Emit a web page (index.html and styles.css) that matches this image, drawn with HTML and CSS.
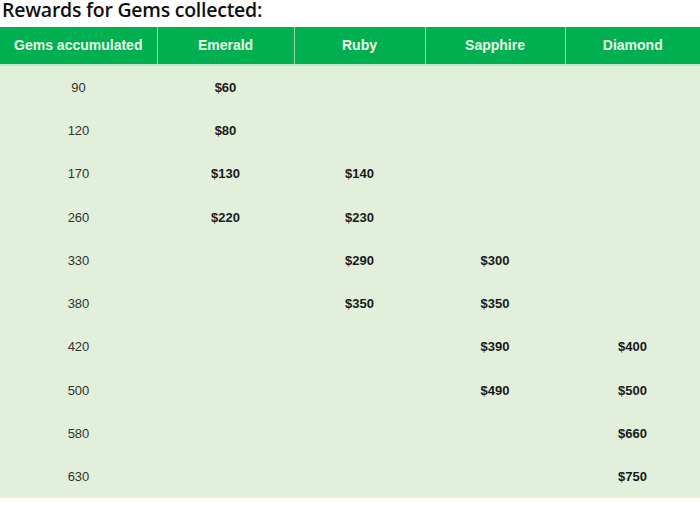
FILE: index.html
```html
<!DOCTYPE html>
<html>
<head>
<meta charset="utf-8">
<link rel="stylesheet" href="styles.css">
</head>
<body>
<h1 class="title">Rewards for Gems collected:</h1>
<table class="rewards">
<colgroup>
<col class="c1"><col class="c2"><col class="c3"><col class="c4"><col class="c5">
</colgroup>
<thead>
<tr><th>Gems accumulated</th><th>Emerald</th><th>Ruby</th><th>Sapphire</th><th>Diamond</th></tr>
</thead>
<tbody>
<tr><td>90</td><td class="v">$60</td><td></td><td></td><td></td></tr>
<tr><td>120</td><td class="v">$80</td><td></td><td></td><td></td></tr>
<tr><td>170</td><td class="v">$130</td><td class="v">$140</td><td></td><td></td></tr>
<tr><td>260</td><td class="v">$220</td><td class="v">$230</td><td></td><td></td></tr>
<tr><td>330</td><td></td><td class="v">$290</td><td class="v">$300</td><td></td></tr>
<tr><td>380</td><td></td><td class="v">$350</td><td class="v">$350</td><td></td></tr>
<tr><td>420</td><td></td><td></td><td class="v">$390</td><td class="v">$400</td></tr>
<tr><td>500</td><td></td><td></td><td class="v">$490</td><td class="v">$500</td></tr>
<tr><td>580</td><td></td><td></td><td></td><td class="v">$660</td></tr>
<tr><td>630</td><td></td><td></td><td></td><td class="v">$750</td></tr>
</tbody>
</table>
</body>
</html>
```
FILE: styles.css
```css
html, body {
  margin: 0;
  padding: 0;
  background: #ffffff;
}
.title {
  margin: 0;
  padding: 0 0 0 2px;
  height: 27px;
  font-family: "Open Sans", sans-serif;
  font-weight: 600;
  font-size: 19.5px;
  line-height: 20px;
  color: #111;
  letter-spacing: -0.25px;
}
.rewards {
  border-collapse: collapse;
  width: 700px;
  table-layout: fixed;
  font-family: "Liberation Sans", Arial, sans-serif;
  font-size: 13px;
}
.c1 { width: 157px; }
.c2 { width: 137px; }
.c3 { width: 131px; }
.c4 { width: 140px; }
.c5 { width: 135px; }
.rewards th {
  background: #00b050;
  color: #eafbea;
  font-weight: bold;
  font-size: 14px;
  height: 36.5px;
  padding: 0;
  border-left: 1px solid #8ad9a6;
  border-bottom: 2px solid #b8eabf;
  text-align: center;
}
.rewards th:first-child { border-left: none; }
.rewards td {
  background: #e2efda;
  height: 43.3px;
  padding: 0;
  text-align: center;
  color: #333;
}
.rewards td.v {
  font-weight: bold;
  color: #1a1a1a;
}
```
